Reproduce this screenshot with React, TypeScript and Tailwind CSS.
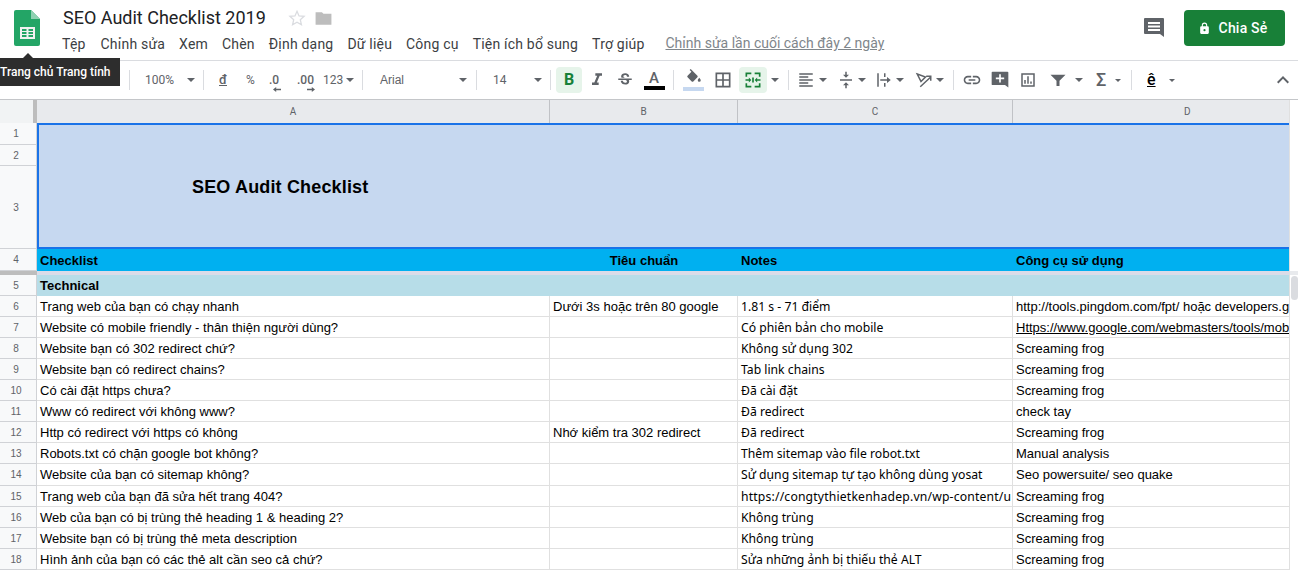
import { MdFormatAlignLeft, MdFormatItalic, MdStrikethroughS, MdVerticalAlignCenter, MdBorderAll, MdLink } from 'react-icons/md'

const rows: [string, string, string, string, string][] = [
  ['6', 'Trang web của bạn có chạy nhanh', 'Dưới 3s hoặc trên 80 google', '1.81 s - 71 điểm', 'http://tools.pingdom.com/fpt/ hoặc developers.g'],
  ['7', 'Website có mobile friendly - thân thiện người dùng?', '', 'Có phiên bản cho mobile', 'Https://www.google.com/webmasters/tools/mob'],
  ['8', 'Website bạn có 302 redirect chứ?', '', 'Không sử dụng 302', 'Screaming frog'],
  ['9', 'Website bạn có redirect chains?', '', 'Tab link chains', 'Screaming frog'],
  ['10', 'Có cài đặt https chưa?', '', 'Đã cài đặt', 'Screaming frog'],
  ['11', 'Www có redirect với không www?', '', 'Đã redirect', 'check tay'],
  ['12', 'Http có redirect với https có không', 'Nhớ kiểm tra 302 redirect', 'Đã redirect', 'Screaming frog'],
  ['13', 'Robots.txt có chặn google bot không?', '', 'Thêm sitemap vào file robot.txt', 'Manual analysis'],
  ['14', 'Website của bạn có sitemap không?', '', 'Sử dụng sitemap tự tạo không dùng yosat', 'Seo powersuite/ seo quake'],
  ['15', 'Trang web của bạn đã sửa hết trang 404?', '', 'https://congtythietkenhadep.vn/wp-content/u', 'Screaming frog'],
  ['16', 'Web của bạn có bị trùng thẻ heading 1 & heading 2?', '', 'Không trùng', 'Screaming frog'],
  ['17', 'Website bạn có bị trùng thẻ meta description', '', 'Không trùng', 'Screaming frog'],
  ['18', 'Hình ảnh của bạn có các thẻ alt cần seo cả chứ?', '', 'Sửa những ảnh bị thiếu thẻ ALT', 'Screaming frog'],
]

const menu = ['Chỉnh sửa', 'Xem', 'Chèn', 'Định dạng', 'Dữ liệu', 'Công cụ', 'Tiện ích bổ sung', 'Trợ giúp']

function Caret({ className = '' }: { className?: string }) {
  return <span className={`h-0 w-0 shrink-0 border-x-[4px] border-t-[4px] border-x-transparent border-t-[#5f6368] ${className}`} />
}

function SmallCaret({ className = '' }: { className?: string }) {
  return <span className={`h-0 w-0 shrink-0 border-x-[3px] border-t-[3px] border-x-transparent border-t-[#5f6368] ${className}`} />
}

function Sep({ className = '' }: { className?: string }) {
  return <span className={`h-5 w-px shrink-0 bg-[#dadce0] ${className}`} />
}

function Icon({ d, className = 'h-[18px] w-[18px]', fill = '#5f6368' }: { d: string; className?: string; fill?: string }) {
  return (
    <svg viewBox="0 0 24 24" className={`shrink-0 ${className}`} fill={fill}>
      <path d={d} />
    </svg>
  )
}

function RowNum({ n, h = 'h-[21px]' }: { n: string; h?: string }) {
  return (
    <div className={`${h} flex items-center justify-center border-b border-r border-[#d0d2d6] bg-[#f8f9fa] pr-1 text-[10px] text-[#5f6368]`}>{n}</div>
  )
}

export default function App() {
  return (
    <div className="relative h-[570px] w-[1298px] overflow-hidden bg-white font-['Liberation_Sans',sans-serif]">
      {/* title bar */}
      <div className="flex h-[61px] border-b border-[#dadce0]">
        <div className="w-[63px] pl-[14px] pt-[10px]">
          <svg viewBox="0 0 26 36" className="h-[36px] w-[26px]">
            <path d="M2 0h15l9 9v25a2 2 0 0 1-2 2H2a2 2 0 0 1-2-2V2a2 2 0 0 1 2-2z" fill="#23a566" />
            <path d="M17 0l9 9h-9z" fill="#8ed1b1" />
            <path d="M6 17h15v12H6z" fill="#f1f1f1" />
            <path d="M8 19h4.500v2H8zM14.500 19H19v2h-4.500zM8 22h4.500v2H8zM14.500 22H19v2h-4.500zM8 25h4.500v2H8zM14.500 25H19v2h-4.500z" fill="#23a566" />
          </svg>
        </div>
        <div className="flex-1 font-['Roboto',sans-serif]">
          <div className="flex h-[34px] items-center pt-[2px]">
            <span className="text-[18px] leading-6 text-[#202124]">SEO Audit Checklist 2019</span>
            <svg viewBox="0 0 24 24" className="ml-[22px] h-[18px] w-[18px]" fill="none" stroke="#dadce0" strokeWidth="1.700">
              <path d="M12 3l2.700 6.200 6.800.6-5.100 4.500 1.500 6.700L12 17.500 6.100 21l1.500-6.700-5.100-4.500 6.800-.6z" />
            </svg>
            <svg viewBox="0 0 24 24" className="ml-[8px] h-[19px] w-[19px]" fill="#bdbdbd">
              <path d="M2 4h8l2 2h10v14H2z" />
            </svg>
          </div>
          <div className="-ml-px mt-px flex h-[19px] items-center gap-[14px] text-[14px] text-[#3c4043]">
            <span className="mr-px whitespace-nowrap tracking-[0.2px]">Tệp</span>
            {menu.map(m => (
              <span key={m} className="whitespace-nowrap tracking-[0.2px]">{m}</span>
            ))}
            <span className="mb-[2px] ml-[7px] whitespace-nowrap text-[#80868b] underline">Chỉnh sửa lần cuối cách đây 2 ngày</span>
          </div>
        </div>
        <div className="flex items-start pt-[10px]">
          <Icon d="M3 2h18a1 1 0 0 1 1 1v18l-4-3H3a1 1 0 0 1-1-1V3a1 1 0 0 1 1-1zm3 4v2h12V6zm0 3.500v2h12v-2zM6 13v2h12v-2z" className="mr-[18px] mt-[6px] h-[24px] w-[24px]" />
          <div className="mr-[13px] flex h-9 w-[101px] items-center justify-center gap-[8px] rounded bg-[#188038] pr-[4px] font-['Roboto',sans-serif] text-[14px] font-medium tracking-[0.2px] text-white">
            <Icon d="M18 8h-1V6a5 5 0 0 0-10 0v2H6a2 2 0 0 0-2 2v10a2 2 0 0 0 2 2h12a2 2 0 0 0 2-2V10a2 2 0 0 0-2-2zM9 6a3 3 0 0 1 6 0v2H9zm3 11a2 2 0 1 1 0-4 2 2 0 0 1 0 4z" className="h-[13px] w-[13px]" fill="#fff" />
            Chia Sẻ
          </div>
        </div>
      </div>

      {/* toolbar */}
      <div className="flex h-[39px] items-center border-b border-[#c4c6c9] pl-[129px] font-['Roboto',sans-serif] text-[#5f6368]">
        <Sep />
        <span className="ml-[15px] w-[29px] text-[12px]">100%</span>
        <Caret className="ml-[13px]" />
        <Sep className="ml-[8px]" />
        <span className="ml-[15px] w-[8px] text-[13px] font-medium underline">đ</span>
        <span className="ml-[19px] w-[9px] text-[12px]">%</span>
        <span className="relative ml-[14px] w-[11px] text-[12px] font-medium">
          .0
          <svg viewBox="0 0 10 6" className="absolute left-[4px] top-[16px] h-[5px] w-[8px]" fill="#5f6368"><path d="M0 3l4-3v2h6v2H4v2z" /></svg>
        </span>
        <span className="relative ml-[17px] w-[17px] text-[12px] font-medium">
          .00
          <svg viewBox="0 0 10 6" className="absolute left-[10px] top-[16px] h-[5px] w-[8px]" fill="#5f6368"><path d="M10 3L6 0v2H0v2h6v2z" /></svg>
        </span>
        <span className="ml-[9px] w-[22px] text-[12px]">123</span>
        <Caret className="ml-[1px]" />
        <Sep className="ml-[8px]" />
        <span className="ml-[17px] w-[79px] font-['Liberation_Sans',sans-serif] text-[12px]">Arial</span>
        <Caret />
        <Sep className="ml-[9px]" />
        <span className="ml-[16px] w-[41px] text-[12px]">14</span>
        <Caret />
        <Sep className="ml-[8px]" />
        <span className="ml-[5px] flex h-[26px] w-[26px] items-center justify-center rounded-sm bg-[#e6f4ea] text-[16px] font-bold text-[#188038]">B</span>
        <span className="ml-[3px] flex w-[24px] justify-center"><MdFormatItalic size={20} color="#5f6368" /></span>
        <span className="ml-[4px] flex w-[24px] justify-center"><MdStrikethroughS size={18} color="#5f6368" /></span>
        <span className="ml-[5px] flex w-[24px] flex-col items-center text-[15px] font-medium leading-[16px]">
          A<span className="h-[4px] w-[21px] bg-black" />
        </span>
        <Sep className="ml-[7px]" />
        <span className="ml-[9px] flex w-[21px] flex-col items-center">
          <Icon d="M16.560 8.940L7.620 0 6.210 1.410l2.380 2.380-5.150 5.150a1.490 1.490 0 0 0 0 2.120l5.500 5.500c.29.290.68.440 1.060.440s.77-.150 1.060-.440l5.500-5.500c.590-.580.590-1.530 0-2.120zM19 11.500s-2 2.170-2 3.500a2 2 0 1 0 4 0c0-1.330-2-3.500-2-3.500z" className="h-[18px] w-[18px]" />
          <span className="h-[4px] w-[21px] bg-[#c6d8f0]" />
        </span>
        <span className="ml-[10px] flex w-[18px] justify-center"><MdBorderAll size={20} color="#5f6368" className="shrink-0" /></span>
        <span className="ml-[7px] flex h-[26px] w-[28px] items-center justify-center rounded-sm bg-[#e6f4ea]">
          <Icon d="M3 3h18v5h-2V5h-5V3zM3 3h7v2H5v3H3zM3 21h7v-2H5v-3H3zM21 21h-7v-2h5v-3h2zM3 11h4V9l3 3-3 3v-2H3zM21 11h-4V9l-3 3 3 3v-2h4zM11 9h2v6h-2z" className="h-[20px] w-[20px]" fill="#188038" />
        </span>
        <Caret className="ml-[4px]" />
        <Sep className="ml-[9px]" />
        <MdFormatAlignLeft size={18} color="#5f6368" className="ml-[8px] shrink-0" />
        <Caret className="ml-[4px]" />
        <MdVerticalAlignCenter size={18} color="#5f6368" className="ml-[10px] shrink-0" />
        <Caret className="ml-[3px]" />
        <Icon d="M3 3h2v18H3zM12 3h2v5h-2zM12 16h2v5h-2zM7 11h9V8l5 4-5 4v-3H7z" className="ml-[9px] h-[18px] w-[18px]" />
        <Caret className="ml-[3px]" />
        <svg viewBox="0 0 24 24" className="ml-[11px] h-[18px] w-[18px] shrink-0" fill="none" stroke="#5f6368" strokeWidth="2">
          <path d="M3 4l11 4-6 6zM7 21L21 8M15 7h6v6" />
        </svg>
        <Caret className="ml-[3px]" />
        <Sep className="ml-[9px]" />
        <MdLink size={20} color="#5f6368" className="ml-[8px] shrink-0" />
        <Icon d="M3 2h18a1 1 0 0 1 1 1v18l-4-3H3a1 1 0 0 1-1-1V3a1 1 0 0 1 1-1zm8 3v4H7v2h4v4h2v-4h4V9h-4V5z" className="ml-[8px] h-[20px] w-[20px]" />
        <Icon d="M3 3h18v18H3zm2 2v14h14V5zm2 7h2v5H7zm4-5h2v10h-2zm4 7h2v3h-2z" className="ml-[9px] h-[18px] w-[18px]" />
        <Icon d="M2 5h20l-8 8v7h-4v-7z" className="ml-[12px] h-[18px] w-[18px]" />
        <Caret className="ml-[8px]" />
        <span className="ml-[12px] flex w-[12px] justify-center text-[18px] font-medium leading-none">Σ</span>
        <SmallCaret className="ml-[8px]" />
        <Sep className="ml-[10px]" />
        <span className="ml-[15px] w-[10px] text-[16px] font-medium leading-none text-black underline">ê</span>
        <SmallCaret className="ml-[12px]" />
        <Icon d="M7.410 15.410L12 10.830l4.590 4.580L18 14l-6-6-6 6z" className="ml-auto mr-[3px] h-[24px] w-[24px]" />
      </div>

      {/* grid */}
      <div className="flex">
        <div className="w-[1289px] text-[13px] text-black">
          <div className="grid grid-cols-[37px_513px_188px_275px_276px]">
            {/* column headers */}
            <div className="h-[23px] border-r-[4px] border-[#bdbdbd] bg-[#f1f3f4]" />
            {['A', 'B', 'C'].map(c => (
              <div key={c} className="flex h-[23px] items-center justify-center border-r border-[#c0c2c6] bg-[#e8eaed] font-['Roboto',sans-serif] text-[10px] text-[#5f6368]">{c}</div>
            ))}
            <div className="flex h-[23px] items-center bg-[#e8eaed] pl-[171px] font-['Roboto',sans-serif] text-[10px] text-[#5f6368]">D</div>

            {/* frozen rows */}
            <div>
              <RowNum n="1" h="h-[22px]" />
              <RowNum n="2" />
              <RowNum n="3" h="h-[83px]" />
            </div>
            <div className="col-span-4 flex h-[126px] items-center border-y-2 border-l-2 border-[#1a73e8] bg-[#c6d8f0] pl-[153px] pt-[2px]">
              <span className="text-[18px] font-bold tracking-[0.16px]">SEO Audit Checklist</span>
            </div>
            <RowNum n="4" h="h-[22px]" />
            <div className="col-span-4 grid h-[22px] grid-cols-[513px_188px_275px_276px] items-center bg-[#00b0f0] pt-px font-bold">
              <span className="pl-[3px]">Checklist</span>
              <span className="text-center">Tiêu chuẩn</span>
              <span className="pl-[3px]">Notes</span>
              <span className="pl-[3px]">Công cụ sử dụng</span>
            </div>
            <div className="col-span-5 h-[4px] bg-[#dadce8]">
              <div className="h-full w-[37px] bg-[#bdbdbd]" />
            </div>
            <RowNum n="5" />
            <div className="col-span-4 flex h-[21px] items-center bg-[#b7dde8] pl-[3px] font-bold">Technical</div>

            {/* body rows */}
            {rows.map(([n, a, b, c, d]) => (
              <div key={n} className={`col-span-5 grid grid-cols-[37px_513px_188px_275px_276px] ${n === '14' ? 'h-[22px]' : 'h-[21px]'}`}>
                <RowNum n={n} h={n === '14' ? 'h-[22px]' : 'h-[21px]'} />
                <div className="flex items-center overflow-hidden whitespace-nowrap border-b border-r border-[#e0e0e0] pl-[3px] pt-px">{a}</div>
                <div className="flex items-center overflow-hidden whitespace-nowrap border-b border-r border-[#e0e0e0] pl-[3px] pt-px">{b}</div>
                <div className={`flex items-center overflow-hidden whitespace-nowrap border-b border-r border-[#e0e0e0] pl-[3px] pt-[2px] font-['Noto_Sans',sans-serif] text-[12.2px] ${n === '15' ? 'tracking-[0.17px]' : ''}`}>{c}</div>
                <div className={`flex items-center overflow-hidden whitespace-nowrap border-b border-[#e0e0e0] pl-[3px] pt-px ${n === '7' ? 'underline' : ''}`}>{d}</div>
              </div>
            ))}
          </div>
        </div>

        {/* scrollbar */}
        <div className="w-[9px] border-l border-[#e0e0e0] bg-white">
          <div className="h-[171px]" />
          <div className="h-[4px] bg-[#e8eaed]" />
          <div className="ml-[1px] mt-[1px] h-[24px] w-[7px] rounded bg-[#dadce0]" />
        </div>
      </div>

      {/* tooltip */}
      <div className="absolute left-0 top-[58px] flex h-[28px] w-[120px] items-center bg-[#2d2d2d] font-['Roboto',sans-serif] text-[12px] font-medium text-white">
        Trang chủ Trang tính
      </div>
      <div className="absolute left-[23px] top-[53px] h-0 w-0 border-x-[5px] border-b-[5px] border-x-transparent border-b-[#2d2d2d]" />
    </div>
  )
}
